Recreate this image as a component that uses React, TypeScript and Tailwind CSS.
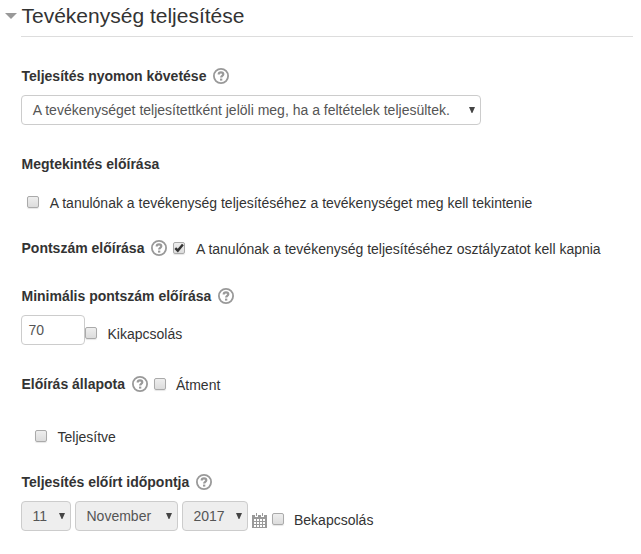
import type { ReactNode } from "react";

function Help() {
  return (
    <svg className="h-4 w-4 shrink-0" viewBox="0 0 16 16" fill="none" stroke="#999">
      <circle cx="8" cy="8" r="7.1" strokeWidth="1.8" />
      <path d="M5.7 6.5C5.7 4.9 6.6 4.3 8 4.3s2.3.8 2.3 1.9c0 1.6-2.2 1.6-2.2 3.3" strokeWidth="2.2" />
      <path d="M7 11.6h2.3" strokeWidth="2" />
    </svg>
  );
}

function Checkbox({ checked = false }: { checked?: boolean }) {
  return (
    <span className="block h-3 w-3 shrink-0 rounded-[2px] border border-[#aaa] bg-linear-to-b from-[#eee] to-[#dcdcdc] shadow-[0_1px_1px_rgba(0,0,0,0.1)]">
      {checked && (
        <svg className="block h-[10px] w-[10px]" viewBox="0 0 10 10" fill="none" stroke="#333" strokeWidth="2.4">
          <path d="M1.3 5.1 3.8 7.6 8.9 1.5" />
        </svg>
      )}
    </span>
  );
}

function Label({ children, help = false }: { children: ReactNode; help?: boolean }) {
  return (
    <div className="flex h-5 items-center font-bold">
      <span className="mr-[7px]">{children}</span>
      {help && <Help />}
    </div>
  );
}

function Select({ children, className }: { children: ReactNode; className: string }) {
  return (
    <div className={`flex h-[30px] shrink-0 items-center justify-between rounded border border-[#ccc] pr-[5px] text-[#555] ${className}`}>
      <span>{children}</span>
      <svg className="h-[6px] w-[6px]" viewBox="0 0 6 6" fill="#444">
        <path d="M0 0h6L3.4 6h-.8Z" />
      </svg>
    </div>
  );
}

function Calendar() {
  return (
    <svg className="h-[15px] w-[15px] shrink-0" viewBox="0 0 15 15">
      <path fill="#999" d="M0 2h3v2h3V2h3v2h3V2h3v13H0Z" />
      <path fill="#999" d="M4 0h1v3H4zM10 0h1v3h-1z" />
      <path
        fill="#fff"
        d="M2 6h2v2H2zM5 6h2v2H5zM8 6h2v2H8zM11 6h2v2h-2zM2 9h2v2H2zM5 9h2v2H5zM8 9h2v2H8zM11 9h2v2h-2zM2 12h2v2H2zM5 12h2v2H5zM8 12h2v2H8zM11 12h2v2h-2z"
      />
    </svg>
  );
}

export default function App() {
  return (
    <main className="h-[554px] w-[641px] overflow-hidden bg-white pr-2 font-['Liberation_Sans',Arial,sans-serif] text-sm whitespace-nowrap text-[#333]">
      <header className="flex h-[37px]">
        <svg className="mt-[13px] mr-1 ml-[5px] h-[6px] w-3" viewBox="0 0 12 6" fill="#999">
          <path d="M0 0h12L6 6Z" />
        </svg>
        <h1 className="flex-1 border-b border-[#ddd] pl-[0.5px] text-[21px] leading-8">Tevékenység teljesítése</h1>
      </header>
      <form className="flex flex-col pl-[21.5px]">
        <section className="mt-[29px]">
          <Label help>Teljesítés nyomon követése</Label>
          <Select className="mt-[9px] -ml-[0.5px] w-[460px] bg-white pl-[10.75px]">
            A tevékenységet teljesítettként jelöli meg, ha a feltételek teljesültek.
          </Select>
        </section>
        <section className="mt-[29px]">
          <Label>Megtekintés előírása</Label>
          <div className="mt-[19px] flex h-5 pl-[5.5px]">
            <div className="mt-[3px] mr-[10.75px]"><Checkbox /></div>
            <span>A tanulónak a tevékenység teljesítéséhez a tevékenységet meg kell tekintenie</span>
          </div>
        </section>
        <section className="mt-[25px] flex h-5">
          <Label help>Pontszám előírása</Label>
          <div className="mt-1 mr-[10.5px] ml-[6px]"><Checkbox checked /></div>
          <span className="mt-px">A tanulónak a tevékenység teljesítéséhez osztályzatot kell kapnia</span>
        </section>
        <section className="mt-7">
          <Label help>Minimális pontszám előírása</Label>
          <div className="mt-[9px] -ml-[0.5px] flex h-[30px]">
            <div className="w-16 rounded border border-[#ccc] pl-[6.5px] leading-7 text-[#555]">70</div>
            <div className="mt-3 mr-[10.5px]"><Checkbox /></div>
            <span className="mt-[9px]">Kikapcsolás</span>
          </div>
        </section>
        <section className="mt-[29px]">
          <div className="flex h-5">
            <Label help>Előírás állapota</Label>
            <div className="mt-1 mr-[10px] ml-[6px]"><Checkbox /></div>
            <span className="mt-px">Átment</span>
          </div>
          <div className="mt-[33px] flex h-5 pl-[13.5px]">
            <div className="mt-[3px] mr-[10.5px]"><Checkbox /></div>
            <span>Teljesítve</span>
          </div>
        </section>
        <section className="mt-[25px]">
          <Label help>Teljesítés előírt időpontja</Label>
          <div className="mt-[9px] -ml-[0.5px] flex h-[30px]">
            <Select className="mr-1 w-[50px] bg-[#eee] pl-[10.5px]">11</Select>
            <Select className="mr-1 w-[103px] bg-[#eee] pl-[10.5px]">November</Select>
            <Select className="mr-1 w-[66px] bg-[#eee] pl-[10.5px]">2017</Select>
            <div className="mt-3"><Calendar /></div>
            <div className="mt-3 mr-[10px] ml-[5px]"><Checkbox /></div>
            <span className="mt-[9px]">Bekapcsolás</span>
          </div>
        </section>
      </form>
    </main>
  );
}
